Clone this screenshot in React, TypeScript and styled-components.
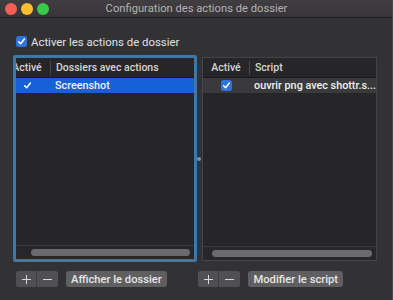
import React from "react";
import styled, { createGlobalStyle } from "styled-components";

const Global = createGlobalStyle`
  html, body { margin: 0; padding: 0; background: #323133; }
  body { font-family: Roboto, "Liberation Sans", sans-serif; -webkit-font-smoothing: antialiased; }
  * { box-sizing: border-box; }
`;

const Window = styled.div`
  width: 393px;
  height: 300px;
  background: #323133;
  display: flex;
  flex-direction: column;
  overflow: hidden;
  border-right: 1px solid #4a484a;
`;

const TitleBar = styled.div`
  height: 18px;
  flex: none;
  display: grid;
  grid-template-columns: 1fr auto 1fr;
  align-items: center;
  background: linear-gradient(#403e40, #373537);
  border-bottom: 1px solid #1c1b1c;
  padding-left: 5px;
`;

const Lights = styled.div`
  display: flex;
  gap: 4px;
`;

const Light = styled.span<{ $c: string }>`
  width: 12px;
  height: 12px;
  border-radius: 50%;
  background: ${(p) => p.$c};
`;

const Title = styled.div`
  font-size: 11.2px;
  color: #b4b2b4;
  margin-left: -4px;
`;

const Body = styled.div`
  flex: 1;
  display: flex;
  flex-direction: column;
  padding: 17px 16px 0 13px;
`;

const CheckRow = styled.label`
  display: flex;
  align-items: center;
  gap: 4px;
  padding-left: 3px;
  height: 13px;
  font-size: 11.4px;
  color: #e2e2e2;
`;

const Box = styled.span`
  width: 11px;
  height: 11px;
  flex: none;
  border-radius: 2.5px;
  background: #2f73db;
  display: inline-flex;
  align-items: center;
  justify-content: center;
`;

const Check = () => (
  <svg width="9" height="9" viewBox="0 0 9 9">
    <path d="M1.6 4.8 L3.6 6.8 L7.4 2" stroke="#fff" strokeWidth="1.5" fill="none" strokeLinecap="round" strokeLinejoin="round" />
  </svg>
);

const Panes = styled.div`
  margin-top: 7px;
  height: 207px;
  display: flex;
  align-items: stretch;
`;

const Divider = styled.div`
  width: 5px;
  flex: none;
  display: flex;
  align-items: center;
  justify-content: center;
  &::after {
    content: "";
    width: 4px;
    height: 4px;
    border-radius: 50%;
    background: #8a8c90;
    margin-left: -2px;
  }
`;

const TablePane = styled.div<{ $focus?: boolean; $w: number }>`
  width: ${(p) => p.$w}px;
  flex: none;
  background: #262527;
  border: ${(p) => (p.$focus ? "3px solid #3d78a8" : "1px solid #454345")};
  border-radius: ${(p) => (p.$focus ? "2px" : "0")};
  display: flex;
  flex-direction: column;
  overflow: hidden;
  margin-top: ${(p) => (p.$focus ? "0" : "2px")};
  margin-bottom: ${(p) => (p.$focus ? "0" : "1px")};
`;

const Scroller = styled.div<{ $offset: number }>`
  flex: 1;
  overflow: hidden;
  display: flex;
  flex-direction: column;
  margin-left: ${(p) => -p.$offset}px;
`;

const Header = styled.div<{ $cols: string }>`
  height: 20px;
  display: grid;
  grid-template-columns: ${(p) => p.$cols};
  align-items: center;
  border-bottom: 1px solid #1a1a1b;
  font-size: 10.5px;
  font-weight: 500;
  color: #d6d6d6;
  background: #262527;
`;

const HeadCell = styled.div<{ $center?: boolean; $sep?: boolean }>`
  height: 14px;
  line-height: 14px;
  text-align: ${(p) => (p.$center ? "center" : "left")};
  padding-left: ${(p) => (p.$center ? "0" : "5px")};
  border-right: ${(p) => (p.$sep ? "1px solid #4a484a" : "none")};
  white-space: nowrap;
  overflow: hidden;
`;

const Row = styled.div<{ $cols: string; $sel?: boolean }>`
  height: 15px;
  display: grid;
  grid-template-columns: ${(p) => p.$cols};
  align-items: center;
  background: ${(p) => (p.$sel ? "#1661d6" : "#3a393b")};
  font-size: 10.8px;
  font-weight: 500;
  color: #f0f0f0;
`;

const Cell = styled.div<{ $center?: boolean }>`
  display: flex;
  justify-content: ${(p) => (p.$center ? "center" : "flex-start")};
  padding-left: ${(p) => (p.$center ? "0" : "4px")};
  white-space: nowrap;
  min-width: 0;
`;

const Fill = styled.div`
  flex: 1;
`;

const ScrollTrack = styled.div<{ $pad: number }>`
  height: 14px;
  flex: none;
  border-top: 1px solid #3a393b;
  background: #272628;
  display: flex;
  align-items: center;
  padding: 0 4px 0 ${(p) => p.$pad}px;
`;

const Knob = styled.div<{ $w: string }>`
  width: ${(p) => p.$w};
  height: 7px;
  border-radius: 4px;
  background: #6b6a6c;
`;

const Footer = styled.div`
  display: flex;
  margin-top: 9px;
`;

const FooterGroup = styled.div<{ $w: number; $pad: number }>`
  width: ${(p) => p.$w}px;
  padding-left: ${(p) => p.$pad}px;
  display: flex;
  align-items: center;
  gap: 8px;
`;

const Segmented = styled.div`
  display: flex;
  height: 16px;
  border-radius: 2px;
  overflow: hidden;
  background: #505052;
`;

const SegBtn = styled.div<{ $first?: boolean }>`
  width: 21px;
  display: flex;
  align-items: center;
  justify-content: center;
  border-right: ${(p) => (p.$first ? "1px solid #3e3e40" : "none")};
`;

const PushBtn = styled.div`
  height: 16px;
  padding: 0 5px;
  border-radius: 3px;
  background: #5f5e60;
  color: #e6e6e6;
  font-size: 11.2px;
  font-weight: 500;
  display: flex;
  align-items: center;
`;

const Plus = () => (
  <svg width="9" height="9" viewBox="0 0 9 9">
    <path d="M4.5 0 V9 M0 4.5 H9" stroke="#d8d8d8" strokeWidth="1" />
  </svg>
);
const Minus = () => (
  <svg width="9" height="9" viewBox="0 0 9 9">
    <path d="M0 4.5 H9" stroke="#d8d8d8" strokeWidth="1" />
  </svg>
);

export default function App() {
  const cols = "47px 1fr";
  return (
    <>
      <Global />
      <Window>
        <TitleBar>
          <Lights>
            <Light $c="#f25f58" />
            <Light $c="#fbbe2e" />
            <Light $c="#39c94a" />
          </Lights>
          <Title>Configuration des actions de dossier</Title>
          <div />
        </TitleBar>
        <Body>
          <CheckRow>
            <Box>
              <Check />
            </Box>
            Activer les actions de dossier
          </CheckRow>
          <Panes>
            <TablePane $focus $w={184}>
              <Scroller $offset={12}>
                <Header $cols={cols}>
                  <HeadCell $center $sep>Activé</HeadCell>
                  <HeadCell>Dossiers avec actions</HeadCell>
                </Header>
                <Row $cols={cols} $sel>
                  <Cell $center>
                    <Check />
                  </Cell>
                  <Cell>Screenshot</Cell>
                </Row>
                <Fill />
              </Scroller>
              <ScrollTrack $pad={15}>
                <Knob $w="160px" />
              </ScrollTrack>
            </TablePane>
            <Divider />
            <TablePane $w={175}>
              <Scroller $offset={0}>
                <Header $cols={cols}>
                  <HeadCell $center $sep>Activé</HeadCell>
                  <HeadCell>Script</HeadCell>
                </Header>
                <Row $cols={cols}>
                  <Cell $center>
                    <Box>
                      <Check />
                    </Box>
                  </Cell>
                  <Cell>ouvrir png avec shottr.s...</Cell>
                </Row>
                <Fill />
              </Scroller>
              <ScrollTrack $pad={9}>
                <Knob $w="160px" />
              </ScrollTrack>
            </TablePane>
          </Panes>
          <Footer>
            <FooterGroup $w={188} $pad={3}>
              <Segmented>
                <SegBtn $first>
                  <Plus />
                </SegBtn>
                <SegBtn>
                  <Minus />
                </SegBtn>
              </Segmented>
              <PushBtn>Afficher le dossier</PushBtn>
            </FooterGroup>
            <FooterGroup $w={180} $pad={0}>
              <Segmented>
                <SegBtn $first>
                  <Plus />
                </SegBtn>
                <SegBtn>
                  <Minus />
                </SegBtn>
              </Segmented>
              <PushBtn>Modifier le script</PushBtn>
            </FooterGroup>
          </Footer>
        </Body>
      </Window>
    </>
  );
}
